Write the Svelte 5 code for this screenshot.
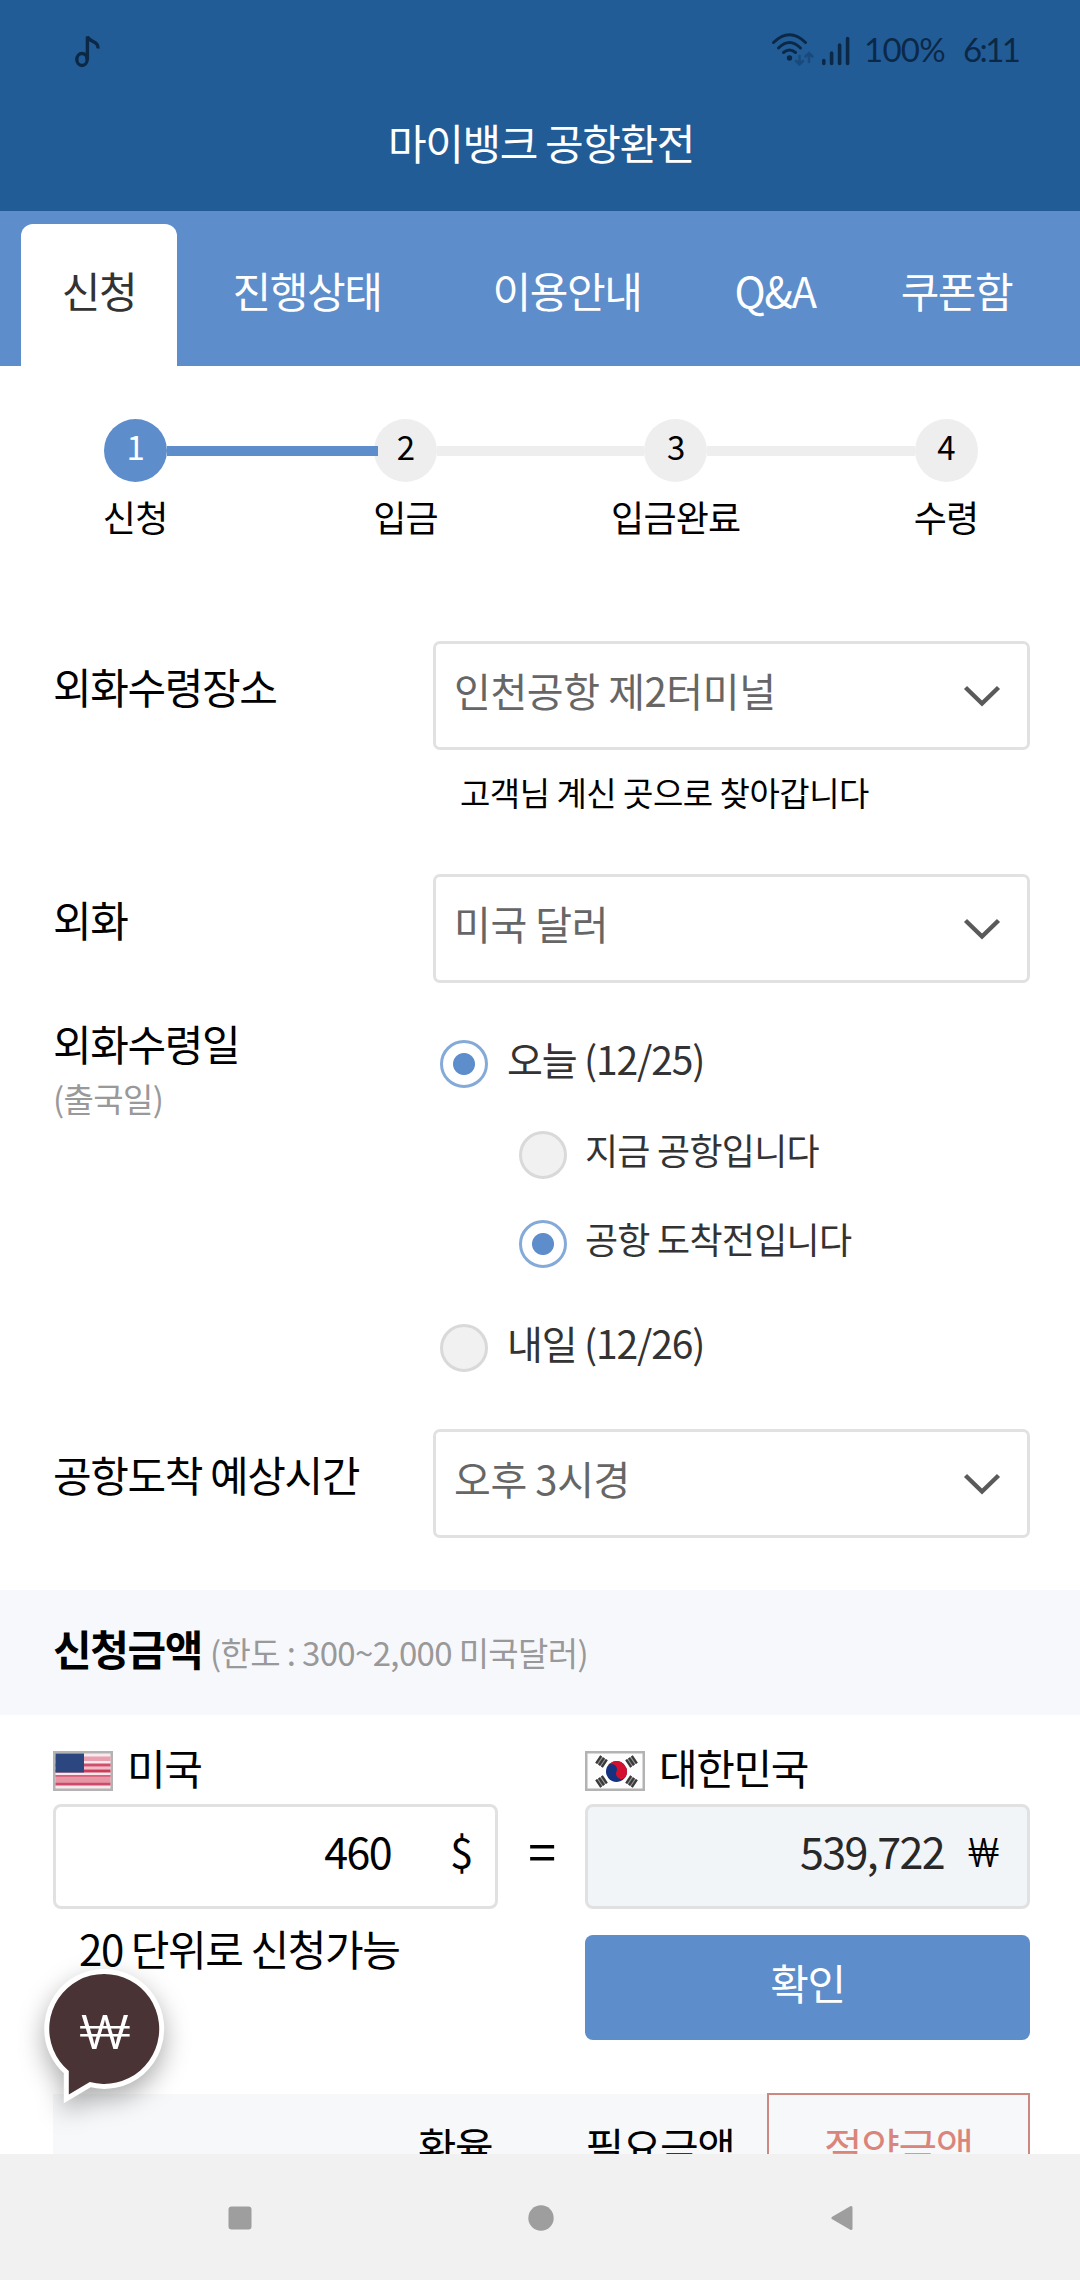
<script lang="ts">
  type Option = {
    id: string;
    label: string;
    sub?: boolean;
  };

  const tabs = ["신청", "진행상태", "이용안내", "Q&A", "쿠폰함"];
  const steps = ["신청", "입금", "입금완료", "수령"];
  const options: Option[] = [
    { id: "today", label: "오늘 (12/25)" },
    { id: "now", label: "지금 공항입니다", sub: true },
    { id: "before", label: "공항 도착전입니다", sub: true },
    { id: "tomorrow", label: "내일 (12/26)" },
  ];

  let activeTab = $state(0);
  let currentStep = $state(0);
  let day = $state("today");
  let arrival = $state("before");

  const isChecked = (o: Option) => (o.sub ? arrival === o.id : day === o.id);

  function pick(o: Option) {
    if (o.sub) arrival = o.id;
    else day = o.id;
  }
</script>

{#snippet select(value: string)}
  <div class="select">
    <span>{value}</span>
    <svg class="chevron" width="38" height="22" viewBox="0 0 38 22">
      <path d="M2.5 2.5 L19 18.5 L35.5 2.5" fill="none" stroke="#5a5a5a" stroke-width="4.4" />
    </svg>
  </div>
{/snippet}

{#snippet trigram(x: number, y: number, angle: number)}
  <g transform="translate({x} {y}) rotate({angle})" fill="#3a3a3a">
    <rect x="-4.2" y="-4.2" width="8.4" height="8.4" fill="#999" />
    <rect x="-4.5" y="-4.6" width="9" height="2.3" />
    <rect x="-4.5" y="-1.1" width="9" height="2.3" />
    <rect x="-4.5" y="2.3" width="9" height="2.3" />
  </g>
{/snippet}

<div class="screen">
  <header>
    <div class="status">
      <svg class="note" width="28" height="34" viewBox="0 0 28 34">
        <ellipse cx="8" cy="25.5" rx="5.2" ry="6" />
        <path d="M13.4 25.5 V2.5 C15 8 25 7 24 14.5" />
      </svg>
      <svg class="signal" width="80" height="36" viewBox="0 0 80 36">
        <g fill="none" stroke="#0b2947" stroke-width="3" stroke-linecap="round">
          <path d="M2.5 10.5 Q18.5 -5 34.5 10.5" />
          <path d="M7.5 16 Q18.5 5 29.5 16" />
          <path d="M12.5 20.5 Q18.5 15.5 24.5 20.5" />
        </g>
        <circle cx="18.5" cy="26" r="2.7" fill="#0b2947" />
        <g fill="none" stroke="#1a4a7b" stroke-width="2.6" stroke-linecap="round">
          <path d="M28.5 24 V32 M25 29 L28.5 32.5 L32 29" />
          <path d="M38 30 V21 M34.5 24.5 L38 21 L41.5 24.5" />
        </g>
        <g stroke="#0b2947" stroke-width="3.6" stroke-linecap="round">
          <path d="M52.8 28.5 V31.5 M60.6 21 V31.5 M68.6 13 V31.5 M76.6 6.5 V31.5" />
        </g>
      </svg>
      <span class="battery">100%</span>
      <span class="clock">6:11</span>
    </div>
    <h1>마이뱅크 공항환전</h1>
  </header>

  <nav class="tabs">
    {#each tabs as tab, i}
      <button type="button" class:active={i === activeTab} onclick={() => (activeTab = i)}>{tab}</button>
    {/each}
  </nav>

  <main>
    <ol class="steps">
      {#each steps as step, i}
        <li>
          <div class="track">
            <i class="line before" class:none={i === 0} class:done={i === currentStep + 1}></i>
            <b class:current={i === currentStep}>{i + 1}</b>
            <i class="line" class:none={i === steps.length - 1} class:done={i === currentStep}></i>
          </div>
          <span>{step}</span>
        </li>
      {/each}
    </ol>

    <section class="form">
      <div class="row place">
        <div class="label">외화수령장소</div>
        <div>
          {@render select("인천공항 제2터미널")}
          <p class="hint">고객님 계신 곳으로 찾아갑니다</p>
        </div>
      </div>
      <div class="row currency">
        <div class="label">외화</div>
        {@render select("미국 달러")}
      </div>
      <div class="row date">
        <div class="label">외화수령일<small>(출국일)</small></div>
        <div class="options">
          {#each options as option}
            <button type="button" class="option" class:sub={option.sub} onclick={() => pick(option)}>
              <i class="radio" class:checked={isChecked(option)}></i>
              <span>{option.label}</span>
            </button>
          {/each}
        </div>
      </div>
      <div class="row time">
        <div class="label">공항도착 예상시간</div>
        {@render select("오후 3시경")}
      </div>
    </section>

    <h2>신청금액 <small>(한도 : 300~2,000 미국달러)</small></h2>

    <section class="exchange">
      <div class="side">
        <div class="country">
          <svg width="60" height="40" viewBox="0 0 60 40">
            <rect width="60" height="40" fill="#b3b3b3" />
            <rect x="2.5" y="2.5" width="55" height="35" fill="#fae9ec" />
            <rect x="2.5" y="5.5" width="55" height="4.5" fill="#e8a0b0" />
            <rect x="2.5" y="12.5" width="55" height="3.2" fill="#cf4f6b" />
            <rect x="2.5" y="15.7" width="55" height="2.8" fill="#f0bcc7" />
            <rect x="2.5" y="18.5" width="55" height="3" fill="#c93d5b" />
            <rect x="2.5" y="24" width="55" height="7.5" fill="#e796a8" />
            <rect x="2.5" y="24" width="55" height="1.8" fill="#d9607a" />
            <rect x="2.5" y="31.5" width="55" height="3" fill="#cf4a68" />
            <rect x="2.5" y="2.5" width="28.5" height="19" fill="#2c477f" />
          </svg>
          미국
        </div>
        <div class="field dollar"><span>460</span><em>$</em></div>
        <p class="unit">20 단위로 신청가능</p>
      </div>
      <div class="equals">=</div>
      <div class="side">
        <div class="country">
          <svg width="60" height="40" viewBox="0 0 60 40">
            <rect width="60" height="40" fill="#b3b3b3" />
            <rect x="2.5" y="2.5" width="55" height="35" fill="#fdfdfd" />
            <g transform="rotate(25 31.5 20.5)">
              <circle cx="31.5" cy="20.5" r="10.5" fill="#14327f" />
              <path
                d="M21 20.5 A10.5 10.5 0 0 1 42 20.5 A5.25 5.25 0 0 1 31.5 20.5 A5.25 5.25 0 0 0 21 20.5"
                fill="#d3102f"
              />
            </g>
            {@render trigram(16.5, 10.5, -56)}
            {@render trigram(46.5, 10.5, 56)}
            {@render trigram(16.5, 30.5, 56)}
            {@render trigram(46.5, 30.5, -56)}
          </svg>
          대한민국
        </div>
        <div class="field won"><span>539,722</span><em>₩</em></div>
        <button type="button" class="confirm">확인</button>
      </div>
    </section>

    <div class="rates">
      <span></span>
      <span>환율</span>
      <span>필요금액</span>
      <span class="saved">절약금액</span>
    </div>
  </main>

  <div class="bubble">
    <svg width="160" height="170" viewBox="0 0 160 170">
      <path
        d="M42.8 106 A55 55 0 1 1 63.8 117 L42.8 129.5 Z"
        fill="#4a3335"
        stroke="#fff"
        stroke-width="10"
        paint-order="stroke"
        stroke-miterlimit="8"
      />
    </svg>
    <span>₩</span>
  </div>

  <footer>
    <svg width="24" height="24" viewBox="0 0 24 24"><rect x="0.5" y="0.5" width="23" height="23" rx="3" /></svg>
    <svg width="26" height="26" viewBox="0 0 26 26"><circle cx="13" cy="13" r="12.7" /></svg>
    <svg width="22" height="26" viewBox="0 0 22 26">
      <path d="M2 13 L20 2.5 V23.5 Z" stroke="#9e9e9e" stroke-width="3" stroke-linejoin="round" />
    </svg>
  </footer>
</div>

<style>
  :global(body) {
    background: #fff;
  }
  .screen {
    position: relative;
    display: flex;
    flex-direction: column;
    width: 1080px;
    height: 2280px;
    overflow: hidden;
    background: #fff;
    color: #000;
    font-family: "Noto Sans CJK KR", sans-serif;
    font-size: 42px;
    line-height: 60px;
    letter-spacing: -1.4px;
  }
  h1,
  h2,
  p,
  ol {
    margin: 0;
    padding: 0;
    font-weight: 400;
    font-size: 42px;
  }
  button {
    padding: 0;
    border: none;
    background: none;
    color: inherit;
    font: inherit;
    letter-spacing: inherit;
  }
  svg {
    flex: none;
    display: block;
  }

  header {
    flex: none;
    height: 211px;
    background: #225c97;
    color: #fff;
    text-align: center;
  }
  h1 {
    padding-left: 2px;
  }
  .status {
    display: flex;
    height: 112px;
    padding: 32px 63px 0 74px;
    box-sizing: border-box;
    color: #0b2947;
    font-family: Lato, sans-serif;
    font-size: 33px;
    line-height: 35px;
  }
  .note {
    margin-top: 2px;
    fill: none;
    stroke: #0b2947;
    stroke-width: 3.4;
  }
  .signal {
    margin-left: auto;
  }
  .battery {
    width: 83px;
    margin-left: 12px;
    letter-spacing: -0.7px;
  }
  .clock {
    width: 54px;
    margin-left: 17px;
    letter-spacing: -2.6px;
  }

  .tabs {
    flex: none;
    display: grid;
    grid-template-columns: 156px 260px 260px 156px 207px;
    height: 142px;
    padding: 13px 20px 0 21px;
    background: #5d8dca;
    color: #fff;
  }
  .tabs button {
    padding-bottom: 10px;
  }
  .tabs .active {
    border-radius: 12px 12px 0 0;
    background: #fff;
    color: #333;
  }

  main {
    flex: none;
    height: 1788px;
    overflow: hidden;
  }
  .steps {
    display: grid;
    grid-template-columns: repeat(4, 270.3px);
    padding-top: 53px;
    list-style: none;
  }
  .steps li {
    text-align: center;
    font-size: 36px;
    line-height: 52px;
    letter-spacing: -0.8px;
  }
  .track {
    display: flex;
    align-items: center;
    margin-bottom: 8px;
  }
  .track b {
    width: 63px;
    height: 63px;
    border-radius: 50%;
    background: #eee;
    font-weight: 400;
    font-size: 33px;
    line-height: 55px;
  }
  .track .current {
    background: #5d8dca;
    color: #fff;
  }
  .line {
    flex: 1;
    height: 10px;
    background: #eee;
  }
  .line.done {
    background: #5d8dca;
  }
  .line.before.done {
    position: relative;
    z-index: 1;
    margin-right: -4px;
    padding-right: 4px;
  }
  .line.none {
    background: none;
  }

  .form {
    padding: 99px 50px 52px 53px;
  }
  .row {
    display: grid;
    grid-template-columns: 380px 597px;
  }
  .label {
    padding-top: 15px;
  }
  .label small {
    display: block;
    margin-top: 1px;
    color: #999;
    font-size: 33px;
    line-height: 48px;
    letter-spacing: -0.6px;
  }
  .currency {
    margin-top: 58px;
  }
  .date {
    margin-top: 15px;
  }
  .time {
    margin-top: 57px;
  }
  .select {
    display: flex;
    align-items: center;
    justify-content: space-between;
    height: 109px;
    padding: 0 26px 0 18px;
    box-sizing: border-box;
    border: 3px solid #e1e1e1;
    border-radius: 7px;
    color: #666;
    font-size: 40px;
    letter-spacing: -0.4px;
  }
  .select span {
    margin-top: -12px;
  }
  .hint {
    margin-top: 18px;
    padding-left: 27px;
    font-size: 33px;
    line-height: 48px;
    letter-spacing: -0.5px;
  }
  .options {
    display: flex;
    flex-direction: column;
    padding: 42px 0 0 7px;
  }
  .option {
    display: flex;
    align-items: center;
    height: 48px;
    color: #333;
    font-size: 39px;
    letter-spacing: -1.15px;
  }
  .option.sub {
    margin: 43px 0 0 79px;
    font-size: 36px;
    letter-spacing: -0.75px;
  }
  .option.sub + .option.sub {
    margin-top: 41px;
  }
  .option.sub + .option:not(.sub) {
    margin-top: 56px;
  }
  .option span {
    margin: -13px 0 0 19px;
  }
  .option.sub span {
    margin-left: 18px;
  }
  .radio {
    width: 48px;
    height: 48px;
    box-sizing: border-box;
    border: 3px solid #d9d9d9;
    border-radius: 50%;
    background: #f1f1f1;
  }
  .radio.checked {
    border-color: #85aad8;
    background: radial-gradient(circle, #5d8dca 10.5px, #fff 11.5px);
  }

  h2 {
    height: 125px;
    padding: 28px 53px 0;
    box-sizing: border-box;
    background: #f7f8fc;
    font-weight: 700;
  }
  h2 small {
    color: #999;
    font-weight: 400;
    font-size: 33px;
    letter-spacing: -0.65px;
  }

  .exchange {
    display: grid;
    grid-template-columns: 445px 87px 445px;
    height: 379px;
    padding: 36px 50px 0 53px;
    box-sizing: border-box;
  }
  .country {
    display: flex;
    gap: 14px;
    height: 53px;
    line-height: 32px;
  }
  .field {
    display: flex;
    justify-content: flex-end;
    height: 105px;
    box-sizing: border-box;
    border: 3px solid #e1e1e1;
    border-radius: 8px;
    line-height: 86px;
  }
  .field span {
    font-size: 43px;
    letter-spacing: -1.6px;
  }
  .field em {
    box-sizing: border-box;
    font-style: normal;
  }
  .dollar em {
    width: 104px;
    padding-left: 59px;
  }
  .won {
    background: #f1f5f8;
  }
  .won span {
    color: #282828;
  }
  .won em {
    width: 83px;
    padding-left: 24px;
    font-family: Roboto, sans-serif;
    font-weight: 300;
    font-size: 41px;
    line-height: 93px;
  }
  .unit {
    margin: 9px 0 0 26px;
  }
  .equals {
    padding-top: 68px;
    text-align: center;
    font-size: 50px;
  }
  .confirm {
    width: 100%;
    height: 105px;
    margin-top: 26px;
    padding-bottom: 11px;
    border-radius: 8px;
    background: #5d8dca;
    color: #fff;
  }

  .rates {
    display: grid;
    grid-template-columns: 304px 196px 214px 263px;
    height: 100px;
    margin: -1px 50px 0 53px;
    background: linear-gradient(#fff 1px, #f6f8fa 1px);
    text-align: center;
    line-height: 106px;
  }
  .saved {
    border: 2px solid #cd8981;
    color: #da857b;
    line-height: 102px;
  }

  .bubble {
    position: absolute;
    left: 26px;
    top: 1965px;
  }
  .bubble svg {
    filter: drop-shadow(0 10px 13px rgba(0, 0, 0, 0.33));
  }
  .bubble span {
    position: absolute;
    left: 19px;
    top: 38px;
    width: 120px;
    color: #fff;
    text-align: center;
    font-family: Roboto, sans-serif;
    font-weight: 300;
    font-size: 48px;
    letter-spacing: 0;
    transform: scaleX(1.42);
  }

  footer {
    display: grid;
    grid-template-columns: repeat(3, 301px);
    align-items: center;
    justify-items: center;
    height: 126px;
    padding: 1px 90px 0 89px;
    box-sizing: border-box;
    background: #f1f1f1;
    fill: #9e9e9e;
  }
</style>
